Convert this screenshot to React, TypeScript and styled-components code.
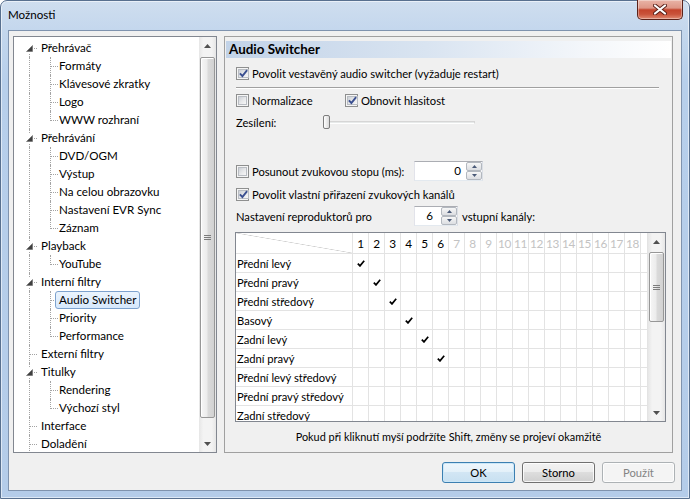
import React from 'react';
import styled, { createGlobalStyle, css } from 'styled-components';

const FONT = `Lato, "Liberation Sans", "DejaVu Sans", sans-serif`;

const Global = createGlobalStyle`
  html, body { margin: 0; padding: 0; background: #fff; }
  body { font-family: ${FONT}; font-size: 11.2px; color: #000; }
  *, *::before, *::after { box-sizing: border-box; }
  #root { width: 690px; height: 499px; }
`;

const Window = styled.div`
  width: 690px;
  height: 499px;
  display: flex;
  flex-direction: column;
  padding: 0 7px 7px;
  border: 1px solid #58708f;
  border-radius: 7px 7px 0 0;
  background: linear-gradient(180deg, #cfdeef 0px, #c4d7ed 29px, #b7cfeb 80px, #b4cce9 100%);
  box-shadow: inset 0 0 0 1px rgba(255, 255, 255, 0.55);
`;

const TitleBar = styled.div`
  height: 29px;
  flex: none;
  display: flex;
  align-items: flex-start;
  justify-content: space-between;
`;

const TitleText = styled.div`
  font-size: 11.6px;
  line-height: 28px;
  color: #000;
`;

const CloseButton = styled.div`
  width: 46px;
  height: 20px;
  margin: -1px -1px 0 0;
  border: 1px solid #5b2219;
  border-top: none;
  border-radius: 0 0 5px 5px;
  background: linear-gradient(180deg, #e9b4a7 0%, #de9686 42%, #c4442c 52%, #c9533a 75%, #e08a72 100%);
  box-shadow: inset 0 0 0 1px rgba(255, 255, 255, 0.35);
  display: flex;
  align-items: center;
  justify-content: center;
`;

const Client = styled.div`
  flex: 1;
  min-height: 0;
  background: #f0f0f0;
  border: 1px solid #7f93ae;
  padding: 5px 6px 7px 4px;
  display: flex;
  flex-direction: column;
`;

const MainRow = styled.div`
  height: 417px;
  flex: none;
  display: flex;
  gap: 7px;
  margin-right: 2px;
`;

const ButtonRow = styled.div`
  margin-top: 9px;
  display: flex;
  justify-content: flex-end;
  gap: 7px;
`;

const Btn = styled.div<{ $variant: 'default' | 'normal' | 'disabled' }>`
  width: 73px;
  height: 21px;
  border-radius: 3px;
  display: flex;
  align-items: center;
  justify-content: center;
  box-shadow: inset 0 0 0 1px rgba(255, 255, 255, 0.8);
  ${(p) =>
    p.$variant === 'default'
      ? css`
          border: 1px solid #3c7fb1;
          background: linear-gradient(180deg, #eef6fc 0%, #e3f0f9 50%, #d2e6f4 50%, #c8e0f1 100%);
          box-shadow: inset 0 0 0 1px #cbe7f8;
        `
      : p.$variant === 'normal'
      ? css`
          border: 1px solid #707070;
          background: linear-gradient(180deg, #f2f2f2 0%, #ebebeb 50%, #dddddd 50%, #cfcfcf 100%);
        `
      : css`
          border: 1px solid #adb2b5;
          background: #f4f4f4;
          color: #838383;
        `}
`;

/* ---------- Scrollbar ---------- */
const ScrollBar = styled.div`
  width: 17px;
  flex: none;
  display: flex;
  flex-direction: column;
  background: linear-gradient(90deg, #e6e6e6 0%, #f3f3f3 25%, #f3f3f3 75%, #e6e6e6 100%);
`;

const ScrollArrow = styled.div`
  height: 17px;
  flex: none;
  display: flex;
  align-items: center;
  justify-content: center;
`;

const ScrollTrack = styled.div`
  flex: 1;
  min-height: 0;
  display: flex;
  flex-direction: column;
`;

const ScrollThumb = styled.div<{ $top: number; $h: number }>`
  margin: ${(p) => p.$top}px 1px 0 1px;
  height: ${(p) => p.$h}px;
  flex: none;
  border: 1px solid #979797;
  border-radius: 2px;
  background: linear-gradient(90deg, #f6f6f6 0%, #ececec 45%, #dadada 55%, #d2d2d2 100%);
  box-shadow: inset 1px 1px 0 #ffffff;
  display: flex;
  align-items: center;
  justify-content: center;
`;

const Grip = styled.div`
  width: 7px;
  height: 5px;
  border-top: 1px solid #7c7c7c;
  border-bottom: 1px solid #7c7c7c;
  background: linear-gradient(#7c7c7c, #7c7c7c) center / 100% 1px no-repeat;
`;

const Arrow = ({ up }: { up?: boolean }) => (
  <svg width="7" height="4" viewBox="0 0 7 4">
    <polygon points={up ? '3.5,0 7,4 0,4' : '0,0 7,0 3.5,4'} fill="#505050" />
  </svg>
);

const Scroll = ({ top, h }: { top: number; h: number }) => (
  <ScrollBar>
    <ScrollArrow>
      <Arrow up />
    </ScrollArrow>
    <ScrollTrack>
      <ScrollThumb $top={top} $h={h}>
        <Grip />
      </ScrollThumb>
    </ScrollTrack>
    <ScrollArrow>
      <Arrow />
    </ScrollArrow>
  </ScrollBar>
);

/* ---------- Tree ---------- */
const TreeBox = styled.div`
  width: 204px;
  flex: none;
  border: 1px solid #828790;
  background: #fff;
  display: flex;
`;

const TreeList = styled.div`
  flex: 1;
  min-width: 0;
  overflow: hidden;
  padding-top: 2px;
  display: flex;
  flex-direction: column;
`;

const TreeRow = styled.div`
  height: 18px;
  flex: none;
  display: flex;
  align-items: stretch;
`;

const DOT = '1px dotted #a3a3a3';

const RootCell = styled.div<{ $first?: boolean; $leaf?: boolean }>`
  width: 21px;
  flex: none;
  position: relative;
  display: flex;
  align-items: center;
  padding-left: 11px;
  &::before {
    content: '';
    position: absolute;
    left: 15px;
    top: ${(p) => (p.$first ? 9 : 0)}px;
    bottom: 0;
    border-left: ${DOT};
  }
  &::after {
    content: '';
    position: absolute;
    top: 9px;
    left: ${(p) => (p.$leaf ? 16 : 20)}px;
    width: ${(p) => (p.$leaf ? 7 : 3)}px;
    border-top: ${DOT};
  }
`;

const PassCell = styled.div`
  width: 21px;
  flex: none;
  position: relative;
  &::before {
    content: '';
    position: absolute;
    left: 15px;
    top: 0;
    bottom: 0;
    border-left: ${DOT};
  }
`;

const ChildCell = styled.div<{ $last?: boolean }>`
  width: 20px;
  flex: none;
  position: relative;
  &::before {
    content: '';
    position: absolute;
    left: 15px;
    top: 0;
    height: ${(p) => (p.$last ? 10 : 18)}px;
    border-left: ${DOT};
  }
  &::after {
    content: '';
    position: absolute;
    top: 9px;
    left: 16px;
    width: 7px;
    border-top: ${DOT};
  }
`;

const Expander = styled.svg`
  position: relative;
  z-index: 1;
  background: #fff;
`;

const TreeLabel = styled.div<{ $selected?: boolean; $root?: boolean }>`
  position: relative;
  z-index: 1;
  margin-left: ${(p) => (p.$root ? 2 : 0)}px;
  height: 18px;
  padding: 0 3px;
  border: 1px solid transparent;
  border-radius: 3px;
  line-height: 16px;
  font-size: 11.6px;
  white-space: nowrap;
  ${(p) =>
    p.$selected &&
    css`
      border-color: #7da2ce;
      background: linear-gradient(180deg, #ebf4fd 0%, #d6e8fc 100%);
    `}
`;

type TreeNode = { label: string; children?: string[] };

const TREE: TreeNode[] = [
  { label: 'Přehrávač', children: ['Formáty', 'Klávesové zkratky', 'Logo', 'WWW rozhraní'] },
  {
    label: 'Přehrávání',
    children: ['DVD/OGM', 'Výstup', 'Na celou obrazovku', 'Nastavení EVR Sync', 'Záznam'],
  },
  { label: 'Playback', children: ['YouTube'] },
  { label: 'Interní filtry', children: ['Audio Switcher', 'Priority', 'Performance'] },
  { label: 'Externí filtry' },
  { label: 'Titulky', children: ['Rendering', 'Výchozí styl'] },
  { label: 'Interface' },
  { label: 'Doladění' },
];

const SELECTED = 'Audio Switcher';

const Tree = () => (
  <TreeBox>
    <TreeList>
      {TREE.map((node, i) => (
        <React.Fragment key={node.label}>
          <TreeRow>
            <RootCell $first={i === 0} $leaf={!node.children}>
              {node.children && (
                <Expander width="9" height="9" viewBox="0 0 9 9">
                  <polygon points="7.5,1.5 7.5,7.5 1.5,7.5" fill="#404040" stroke="#6a6a6a" strokeWidth="0.6" />
                </Expander>
              )}
            </RootCell>
            <TreeLabel $root>{node.label}</TreeLabel>
          </TreeRow>
          {node.children?.map((c, j) => (
            <TreeRow key={c}>
              <PassCell />
              <ChildCell $last={j === node.children!.length - 1} />
              <TreeLabel $selected={c === SELECTED}>{c}</TreeLabel>
            </TreeRow>
          ))}
        </React.Fragment>
      ))}
    </TreeList>
    <Scroll top={3} h={361} />
  </TreeBox>
);

/* ---------- Page ---------- */
const Page = styled.div`
  flex: 1;
  min-width: 0;
  border: 1px solid #a0a0a0;
  padding: 4px 1px 0;
  display: flex;
  flex-direction: column;
`;

const PageHeader = styled.div`
  height: 17px;
  flex: none;
  padding-left: 3px;
  font-weight: 700;
  font-size: 13.4px;
  line-height: 17px;
  background: linear-gradient(90deg, #c2d3e8 0%, #d9e4f1 45%, #f3f6fa 80%, #ffffff 100%);
`;

const Body = styled.div`
  padding-left: 10px;
  display: flex;
  flex-direction: column;
`;

const Row = styled.div<{ $mt: number; $h?: number }>`
  margin-top: ${(p) => p.$mt}px;
  height: ${(p) => p.$h ?? 18}px;
  flex: none;
  display: flex;
  align-items: center;
  white-space: nowrap;
`;

const Fixed = styled.div<{ $w: number; $ml?: number }>`
  width: ${(p) => p.$w}px;
  margin-left: ${(p) => p.$ml ?? 0}px;
  flex: none;
  display: flex;
  align-items: center;
`;

const Separator = styled.div`
  margin-top: 5px;
  width: 423px;
  height: 2px;
  border-top: 1px solid #a0a0a0;
  border-bottom: 1px solid #ffffff;
`;

const CheckLabel = styled.label`
  display: flex;
  align-items: center;
  gap: 3px;
  white-space: nowrap;
`;

const CheckOuter = styled.span`
  width: 13px;
  height: 13px;
  flex: none;
  border: 1px solid #8e8f8f;
  background: #f5f5f5;
  padding: 1px;
  display: flex;
`;

const CheckInner = styled.span`
  flex: 1;
  border: 1px solid #b9bdc3;
  background: linear-gradient(135deg, #ccd0d6 0%, #e6e7e9 50%, #f7f7f7 100%);
  position: relative;
  display: flex;
  align-items: center;
  justify-content: center;
`;

const Check = ({ checked, label }: { checked?: boolean; label: string }) => (
  <CheckLabel>
    <CheckOuter>
      <CheckInner>
        {checked && (
          <svg width="9" height="9" viewBox="0 0 9 9" style={{ overflow: 'visible' }}>
            <path d="M0.9 4.4 L3.4 7 L8.1 1.2" fill="none" stroke="#3a4f90" strokeWidth="1.9" />
          </svg>
        )}
      </CheckInner>
    </CheckOuter>
    <span>{label}</span>
  </CheckLabel>
);

const Slider = styled.div`
  width: 152px;
  height: 18px;
  position: relative;
  display: flex;
  align-items: center;
  &::before {
    content: '';
    position: absolute;
    left: 3px;
    right: 0;
    top: 8px;
    height: 3px;
    border: 1px solid #d6d6d6;
    border-bottom-color: #ffffff;
    background: #e7eaea;
  }
`;

const SliderThumb = styled.div`
  position: relative;
  width: 7px;
  height: 14px;
  border: 1px solid #7d7d7d;
  border-radius: 2px;
  background: linear-gradient(90deg, #ffffff 0%, #ececec 50%, #dadada 100%);
`;

const SpinBox = styled.div<{ $w: number }>`
  width: ${(p) => p.$w}px;
  height: 20px;
  flex: none;
  display: flex;
  border: 1px solid;
  border-color: #abadb3 #dbdfe6 #e3e9ef #e2e3ea;
  background: #fff;
`;

const SpinValue = styled.div<{ $pr: number }>`
  flex: 1;
  text-align: right;
  padding-right: ${(p) => p.$pr}px;
  line-height: 18px;
  font-size: 11.6px;
`;

const SpinButtons = styled.div`
  width: 16px;
  flex: none;
  display: flex;
  flex-direction: column;
`;

const SpinBtn = styled.div`
  flex: 1;
  border: 1px solid #b3b8bf;
  border-radius: 2px;
  background: linear-gradient(180deg, #f7f7f7 0%, #e9eaec 50%, #dcdee2 100%);
  display: flex;
  align-items: center;
  justify-content: center;
`;

const Spin = ({ w, value, pr }: { w: number; value: string; pr: number }) => (
  <SpinBox $w={w}>
    <SpinValue $pr={pr}>{value}</SpinValue>
    <SpinButtons>
      <SpinBtn>
        <svg width="5" height="3" viewBox="0 0 5 3">
          <polygon points="2.5,0 5,3 0,3" fill="#4a5a78" />
        </svg>
      </SpinBtn>
      <SpinBtn>
        <svg width="5" height="3" viewBox="0 0 5 3">
          <polygon points="0,0 5,0 2.5,3" fill="#4a5a78" />
        </svg>
      </SpinBtn>
    </SpinButtons>
  </SpinBox>
);

/* ---------- Channel grid ---------- */
const GridBox = styled.div`
  margin-top: 6px;
  margin-left: -1px;
  width: 431px;
  height: 190px;
  flex: none;
  border: 1px solid #828790;
  background: #fff;
  display: flex;
`;

const GridTable = styled.div`
  flex: 1;
  min-width: 0;
  overflow: hidden;
  display: grid;
  grid-template-columns: 117px repeat(18, 16px) 1fr;
  grid-template-rows: 21px;
  grid-auto-rows: 19px;
  align-content: start;
`;

const Cell = styled.div<{ $dim?: boolean; $label?: boolean; $corner?: boolean }>`
  border-right: 1px solid #e3e3e3;
  border-bottom: 1px solid #e3e3e3;
  display: flex;
  align-items: center;
  justify-content: ${(p) => (p.$label ? 'flex-start' : 'center')};
  padding-left: ${(p) => (p.$label ? 1 : 0)}px;
  white-space: nowrap;
  overflow: hidden;
  font-size: ${(p) => (p.$label ? 11.2 : 11.8)}px;
  letter-spacing: ${(p) => (p.$label ? 0 : -0.4)}px;
  color: ${(p) => (p.$dim ? '#c3c3c3' : '#000')};
  ${(p) =>
    p.$corner &&
    css`
      background: linear-gradient(to top right, transparent calc(50% - 0.6px), #cfcfcf 50%, transparent calc(50% + 0.6px));
    `}
`;

const Tick = () => (
  <svg width="8" height="7" viewBox="0 0 8 7">
    <path d="M0.8 3.6 L3 5.9 L7.2 0.8" fill="none" stroke="#000" strokeWidth="1.7" />
  </svg>
);

const SPEAKERS = [
  'Přední levý',
  'Přední pravý',
  'Přední středový',
  'Basový',
  'Zadní levý',
  'Zadní pravý',
  'Přední levý středový',
  'Přední pravý středový',
  'Zadní středový',
];

const COLS = Array.from({ length: 18 }, (_, i) => i + 1);

const ChannelGrid = () => (
  <GridBox>
    <GridTable>
      <Cell $corner />
      {COLS.map((c) => (
        <Cell key={c} $dim={c > 6}>
          {c}
        </Cell>
      ))}
      <Cell />
      {SPEAKERS.map((s, r) => (
        <React.Fragment key={s}>
          <Cell $label>{s}</Cell>
          {COLS.map((c) => (
            <Cell key={c}>{c === r + 1 && r < 6 ? <Tick /> : null}</Cell>
          ))}
          <Cell />
        </React.Fragment>
      ))}
    </GridTable>
    <Scroll top={2} h={70} />
  </GridBox>
);

const Hint = styled.div`
  margin-top: 6px;
  height: 18px;
  line-height: 18px;
  text-align: center;
  font-size: 10.9px;
`;

const CloseGlyph = () => (
  <svg width="14" height="11" viewBox="0 0 14 11">
    <path d="M2 1.5 L12 9.5 M12 1.5 L2 9.5" stroke="#5a2018" strokeWidth="4" strokeLinecap="round" />
    <path d="M2 1.5 L12 9.5 M12 1.5 L2 9.5" stroke="#ffffff" strokeWidth="2.2" strokeLinecap="round" />
  </svg>
);

export default function App() {
  return (
    <>
      <Global />
      <Window>
        <TitleBar>
          <TitleText>Možnosti</TitleText>
          <CloseButton>
            <CloseGlyph />
          </CloseButton>
        </TitleBar>
        <Client>
          <MainRow>
            <Tree />
            <Page>
              <PageHeader>Audio Switcher</PageHeader>
              <Body>
                <Row $mt={6}>
                  <Check checked label="Povolit vestavěný audio switcher (vyžaduje restart)" />
                </Row>
                <Separator />
                <Row $mt={2}>
                  <Fixed $w={109}>
                    <Check label="Normalizace" />
                  </Fixed>
                  <Check checked label="Obnovit hlasitost" />
                </Row>
                <Row $mt={4}>
                  <Fixed $w={87}>Zesílení:</Fixed>
                  <Slider>
                    <SliderThumb />
                  </Slider>
                </Row>
                <Row $mt={30} $h={20}>
                  <Fixed $w={178}>
                    <Check label="Posunout zvukovou stopu (ms):" />
                  </Fixed>
                  <Spin w={69} value="0" pr={5} />
                </Row>
                <Row $mt={4}>
                  <Check checked label="Povolit vlastní přiřazení zvukových kanálů" />
                </Row>
                <Row $mt={3} $h={20}>
                  <Fixed $w={178}>Nastavení reproduktorů pro</Fixed>
                  <Spin w={44} value="6" pr={8} />
                  <Fixed $w={90} $ml={4}>
                    vstupní kanály:
                  </Fixed>
                </Row>
                <ChannelGrid />
              </Body>
              <Hint>Pokud při kliknutí myší podržíte Shift, změny se projeví okamžitě</Hint>
            </Page>
          </MainRow>
          <ButtonRow>
            <Btn $variant="default">OK</Btn>
            <Btn $variant="normal">Storno</Btn>
            <Btn $variant="disabled">Použít</Btn>
          </ButtonRow>
        </Client>
      </Window>
    </>
  );
}
